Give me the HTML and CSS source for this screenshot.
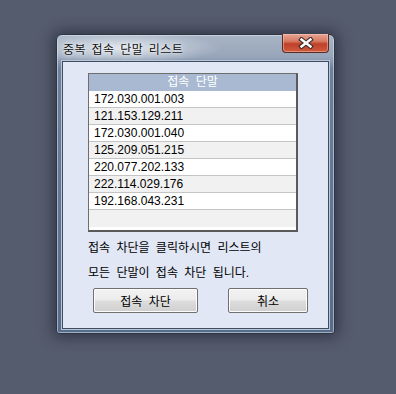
FILE: index.html
```html
<!DOCTYPE html>
<html lang="ko">

<head>
	<meta charset="UTF-8" />
	<title>중복 접속 단말 리스트</title>
	<link rel="stylesheet" href="styles.css">
</head>

<body>
	<div class="window">
		<div class="titlebar">
			<span class="title">중복 접속 단말 리스트</span>
			<button class="close" aria-label="닫기">
				<svg width="16" height="12" viewBox="0 0 16 12">
					<path d="M3.5 2.5 L12.5 9.5 M12.5 2.5 L3.5 9.5" stroke="#3a2a28" stroke-width="4.6" stroke-linecap="square" />
					<path d="M3.5 2.5 L12.5 9.5 M12.5 2.5 L3.5 9.5" stroke="#fff" stroke-width="2.4" stroke-linecap="square" />
				</svg>
			</button>
		</div>

		<div class="client">
			<div class="list">
				<div class="list-head">접속 단말</div>
				<div class="row">172.030.001.003</div>
				<div class="row">121.153.129.211</div>
				<div class="row">172.030.001.040</div>
				<div class="row">125.209.051.215</div>
				<div class="row">220.077.202.133</div>
				<div class="row">222.114.029.176</div>
				<div class="row">192.168.043.231</div>
				<div class="row"></div>
			</div>

			<p class="msg">접속 차단을 클릭하시면 리스트의</p>
			<p class="msg">모든 단말이 접속 차단 됩니다.</p>

			<div class="buttons">
				<button class="btn btn-block">접속 차단</button>
				<button class="btn btn-cancel">취소</button>
			</div>
		</div>
	</div>
</body>

</html>
```

FILE: styles.css
```css
html, body {
	margin: 0; padding: 0; height: 100%;
	background: #555c6e;
	font-family: "Liberation Sans", "Noto Sans CJK KR", sans-serif;
	font-size: 12px; color: #000;
}

body { padding: 34px 0 0 56px; box-sizing: border-box; }

/* window frame */
.window {
	width: 279px; height: 300px; box-sizing: border-box;
	display: flex; flex-direction: column;
	border: 1px solid #2e3644;
	border-radius: 6px 6px 3px 3px;
	background: linear-gradient(to bottom, #a9b5c6 0, #97a5ba 22px, #6d819c 34px, #566c8a 100%);
	box-shadow: inset 0 0 0 1px rgba(220, 230, 240, 0.55), 0 0 14px 3px rgba(20, 24, 34, 0.55);
}

.titlebar {
	height: 26px; flex: none;
	display: flex; align-items: flex-start; justify-content: space-between;
	background: radial-gradient(ellipse 100px 16px at 64px 13px, rgba(235, 240, 245, 0.85), rgba(235, 240, 245, 0) 100%);
	border-radius: 5px 5px 0 0;
}

.title {
	margin: 5px 0 0 6px;
	font-size: 12px; letter-spacing: 0.4px; word-spacing: 2px;
	color: #101010;
	text-shadow: 0 0 6px rgba(255, 255, 255, 0.9), 0 0 2px rgba(255, 255, 255, 0.8);
}

.close {
	width: 47px; height: 19px; margin: -1px 5px 0 0; padding: 0;
	display: flex; align-items: center; justify-content: center;
	border: 1px solid #5b2b22; border-top: none;
	border-radius: 0 0 4px 4px;
	background: linear-gradient(to bottom, #e7a594 0, #d77a63 40%, #c0402a 55%, #cf5a3e 100%);
	box-shadow: inset 0 0 0 1px rgba(255, 210, 200, 0.45);
}

/* client area */
.client {
	flex: 1; margin: 0 5px 4px 5px;
	padding: 11px 0 0 25px;
	background: #e1e7f5;
	border: 1px solid #3f4d62;
	box-shadow: 0 0 0 1px #b8c6d6;
}

.list {
	width: 210px; box-sizing: border-box;
	border: 1px solid #6e6e6e; border-right-width: 2px; border-bottom-width: 2px;
	border-right-color: #5a5a5a; border-bottom-color: #5a5a5a;
	background: #fff; padding-bottom: 3px;
}

.list-head {
	height: 17px; line-height: 17px;
	background: #a9b9d1; color: #fff;
	text-align: center; word-spacing: 3px;
}

.row {
	height: 16px; line-height: 16px;
	padding-left: 5px;
	border-bottom: 1px solid #c4c4c4;
	background: #fff;
}

.row:nth-child(odd) { background: #f1f1f1; }
.row:last-child { border-bottom: none; height: 17px; }

.msg {
	margin: 0; height: 25px; line-height: 25px;
	word-spacing: 3px;
}

.msg:first-of-type { margin-top: 4px; }

.buttons { display: flex; gap: 30px; margin: 2px 0 0 5px; }

.btn {
	height: 25px; padding: 0;
	font: inherit; word-spacing: 3px; color: #000;
	border: 1px solid #707070;
	border-radius: 2px;
	background: linear-gradient(to bottom, #f3f3f3 0, #ebebeb 48%, #dddddd 52%, #cfcfcf 100%);
	box-shadow: inset 0 0 0 1px #fcfcfc;
}

.btn-block { width: 105px; }
.btn-cancel { width: 80px; }
```
